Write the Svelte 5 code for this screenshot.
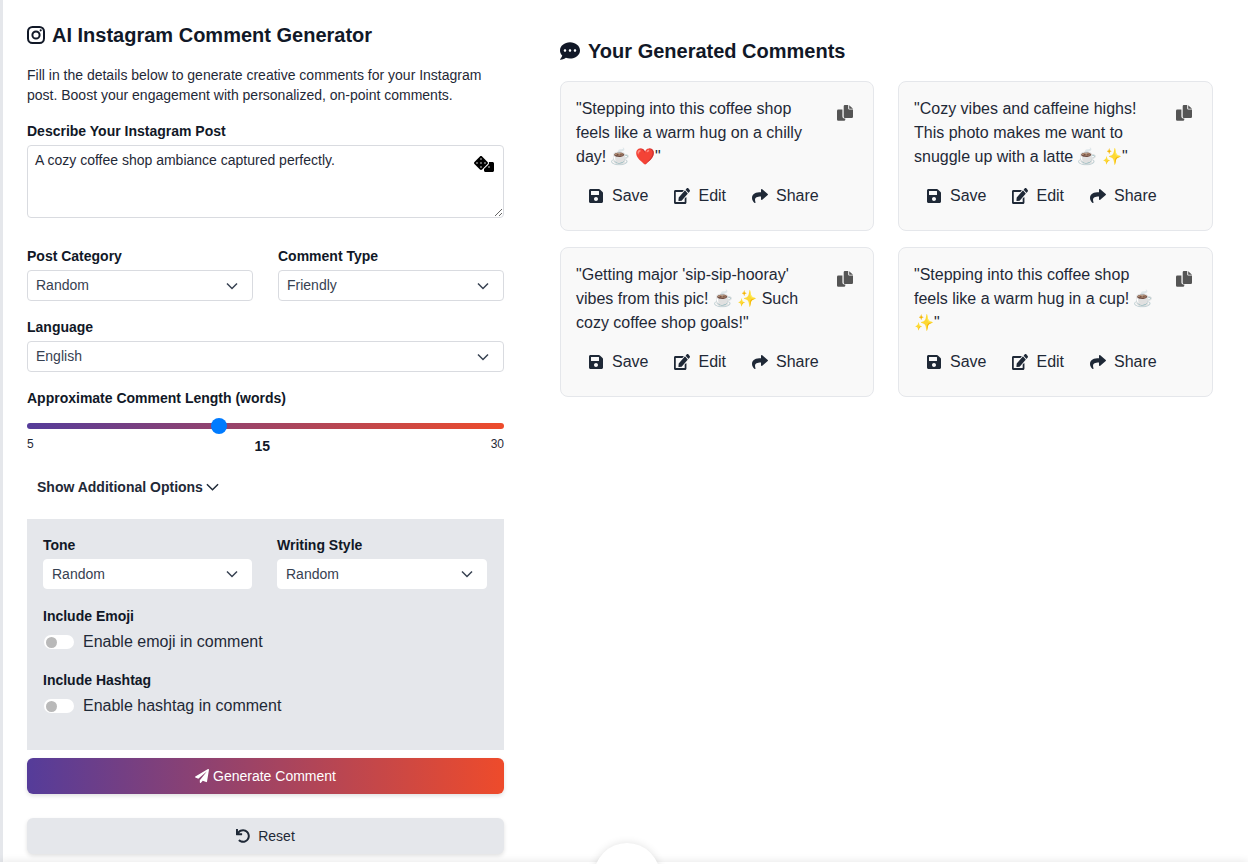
<script>
	const icons = {
		save: {
			box: '0 0 448 512',
			d: 'M433.941 129.941l-83.882-83.882A48 48 0 0 0 316.118 32H48C21.49 32 0 53.49 0 80v352c0 26.51 21.49 48 48 48h352c26.51 0 48-21.49 48-48V163.882a48 48 0 0 0-14.059-33.941zM224 416c-35.346 0-64-28.654-64-64 0-35.346 28.654-64 64-64s64 28.654 64 64c0 35.346-28.654 64-64 64zm96-304.52V212c0 6.627-5.373 12-12 12H76c-6.627 0-12-5.373-12-12V108c0-6.627 5.373-12 12-12h228.52c3.183 0 6.235 1.264 8.485 3.515l3.48 3.48A11.996 11.996 0 0 1 320 111.48z'
		},
		edit: {
			box: '0 0 576 512',
			fit: 'none',
			d: 'M402.6 83.2l90.2 90.2c3.8 3.8 3.8 10 0 13.8L274.4 405.6l-92.8 10.3c-12.4 1.4-22.9-9.1-21.5-21.5l10.3-92.8L388.8 83.2c3.8-3.8 10-3.8 13.8 0zm162-22.9l-48.8-48.8c-15.2-15.2-39.9-15.2-55.2 0l-35.4 35.4c-3.8 3.8-3.8 10 0 13.8l90.2 90.2c3.8 3.8 10 3.8 13.8 0l35.4-35.4c15.2-15.3 15.2-40 0-55.2zM384 346.2V448H64V128h229.8c3.2 0 6.2-1.3 8.5-3.5l40-40c7.6-7.6 2.2-20.5-8.5-20.5H48C21.5 64 0 85.5 0 112v352c0 26.5 21.5 48 48 48h352c26.5 0 48-21.5 48-48V306.2c0-10.7-12.9-16-20.5-8.5l-40 40c-2.2 2.3-3.5 5.3-3.5 8.5z'
		},
		share: {
			box: '0 0 512 512',
			d: 'M503.691 189.836L327.687 37.851C312.281 24.546 288 35.347 288 56.015v80.053C127.371 137.907 0 170.1 0 322.326c0 61.441 39.581 122.309 83.333 154.132 13.653 9.931 33.111-2.533 28.077-18.631C66.066 312.814 132.917 274.316 288 272.085V360c0 20.7 24.3 31.453 39.687 18.164l176.004-152c11.071-9.562 11.086-26.753 0-36.328z'
		}
	};

	const comments = [
		'"Stepping into this coffee shop feels like a warm hug on a chilly day! ☕ ❤️"',
		'"Cozy vibes and caffeine highs! This photo makes me want to snuggle up with a latte ☕ ✨"',
		'"Getting major \'sip-sip-hooray\' vibes from this pic! ☕ ✨ Such cozy coffee shop goals!"',
		'"Stepping into this coffee shop feels like a warm hug in a cup! ☕ ✨"'
	];

	const actions = [
		{ name: 'Save', icon: icons.save },
		{ name: 'Edit', icon: icons.edit },
		{ name: 'Share', icon: icons.share }
	];

	let length = $state(15);
</script>

<div class="page">
	<section class="form">
		<h1>
			<svg class="insta" viewBox="0 0 18 18" fill="none" stroke="currentColor" stroke-width="2">
				<rect x="1" y="1" width="16" height="16" rx="4.5" />
				<circle cx="9" cy="9" r="3.6" />
				<circle cx="13.7" cy="4.3" r="1.1" fill="currentColor" stroke="none" />
			</svg>
			AI Instagram Comment Generator
		</h1>
		<p class="intro">
			Fill in the details below to generate creative comments for your Instagram post. Boost your
			engagement with personalized, on-point comments.
		</p>

		<label class="label" for="post">Describe Your Instagram Post</label>
		<div class="area">
			<textarea id="post">A cozy coffee shop ambiance captured perfectly.</textarea>
			<svg class="dice" viewBox="0 0 640 512">
				<path
					d="M592 192H473.26c12.69 29.59 7.12 65.2-17 89.32L320 417.58V464c0 26.51 21.49 48 48 48h224c26.51 0 48-21.49 48-48V240c0-26.51-21.49-48-48-48zM480 376c-13.25 0-24-10.75-24-24 0-13.26 10.75-24 24-24s24 10.74 24 24c0 13.25-10.75 24-24 24zm-46.37-186.7L258.7 14.37c-19.16-19.16-50.23-19.16-69.39 0L14.37 189.3c-19.16 19.16-19.16 50.23 0 69.39L189.3 433.63c19.16 19.16 50.23 19.16 69.39 0L433.63 258.7c19.16-19.17 19.16-50.24 0-69.4zM96 248c-13.25 0-24-10.75-24-24 0-13.26 10.75-24 24-24s24 10.74 24 24c0 13.25-10.75 24-24 24zm128 128c-13.25 0-24-10.75-24-24 0-13.26 10.75-24 24-24s24 10.74 24 24c0 13.25-10.75 24-24 24zm0-128c-13.25 0-24-10.75-24-24 0-13.26 10.75-24 24-24s24 10.74 24 24c0 13.25-10.75 24-24 24zm0-128c-13.25 0-24-10.75-24-24 0-13.26 10.75-24 24-24s24 10.74 24 24c0 13.25-10.75 24-24 24zm128 128c-13.25 0-24-10.75-24-24 0-13.26 10.75-24 24-24s24 10.74 24 24c0 13.25-10.75 24-24 24z"
				/>
			</svg>
		</div>

		<div class="two first">
			<div>
				<label class="label" for="category">Post Category</label>
				<select id="category"><option>Random</option></select>
			</div>
			<div>
				<label class="label" for="type">Comment Type</label>
				<select id="type"><option>Friendly</option></select>
			</div>
		</div>

		<label class="label lang" for="language">Language</label>
		<select id="language"><option>English</option></select>

		<label class="label range-label" for="length">Approximate Comment Length (words)</label>
		<input id="length" class="range" type="range" min="5" max="30" bind:value={length} />
		<div class="scale">
			<span>5</span>
			<b>{length}</b>
			<span>30</span>
		</div>

		<button class="more">
			Show Additional Options
			<svg viewBox="0 0 14 8" fill="none" stroke="currentColor" stroke-width="1.6">
				<path d="M1 1l6 6 6-6" />
			</svg>
		</button>

		<div class="extra">
			<div class="two inner">
				<div>
					<label class="label" for="tone">Tone</label>
					<select id="tone"><option>Random</option></select>
				</div>
				<div>
					<label class="label" for="style">Writing Style</label>
					<select id="style"><option>Random</option></select>
				</div>
			</div>

			<div class="label switch-title">Include Emoji</div>
			<div class="switch"><span class="track"><i></i></span>Enable emoji in comment</div>
			<div class="label switch-title second">Include Hashtag</div>
			<div class="switch"><span class="track"><i></i></span>Enable hashtag in comment</div>
		</div>

		<button class="generate">
			<svg viewBox="0 0 512 512">
				<path
					d="M476 3.2L12.5 270.6c-18.1 10.4-15.8 35.6 2.2 43.2L121 358.4l287.3-253.2c5.5-4.9 13.3 2.6 8.6 8.3L176 407v80.5c0 23.6 28.5 32.9 42.5 15.8L282 426l124.6 52.2c14.2 6 30.4-2.9 33-18.2l72-432C515 7.8 493.3-6.8 476 3.2z"
				/>
			</svg>
			Generate Comment
		</button>
		<button class="reset">
			<svg viewBox="0 0 512 512">
				<path
					d="M212.333 224.333H12c-6.627 0-12-5.373-12-12V12C0 5.373 5.373 0 12 0h48c6.627 0 12 5.373 12 12v78.112C117.773 39.279 184.26 7.47 258.175 8.007c136.906.994 246.448 111.623 246.157 248.532C504.041 393.258 393.12 504 256.333 504c-64.089 0-122.496-24.313-166.51-64.215-5.099-4.622-5.334-12.554-.467-17.42l33.967-33.967c4.474-4.474 11.662-4.717 16.401-.525C170.76 415.336 211.58 432 256.333 432c97.268 0 176-78.716 176-176 0-97.267-78.716-176-176-176-58.496 0-110.28 28.476-142.274 72.333h98.274c6.627 0 12 5.373 12 12v48c0 6.627-5.373 12-12 12z"
				/>
			</svg>
			Reset
		</button>
	</section>

	<section class="results">
		<h2>
			<svg viewBox="0 0 512 512">
				<path
					d="M256 32C114.6 32 0 125.1 0 240c0 49.6 21.4 95 57 130.7C44.5 421.1 2.7 466 2.2 466.5c-2.2 2.3-2.8 5.7-1.5 8.7S4.8 480 8 480c66.3 0 116-31.8 140.6-51.4 32.7 12.3 69 19.4 107.4 19.4 141.4 0 256-93.1 256-208S397.4 32 256 32zM128 272c-17.7 0-32-14.3-32-32s14.3-32 32-32 32 14.3 32 32-14.3 32-32 32zm128 0c-17.7 0-32-14.3-32-32s14.3-32 32-32 32 14.3 32 32-14.3 32-32 32zm128 0c-17.7 0-32-14.3-32-32s14.3-32 32-32 32 14.3 32 32-14.3 32-32 32z"
				/>
			</svg>
			Your Generated Comments
		</h2>
		<div class="cards">
			{#each comments as text}
				<article class="card">
					<div class="top">
						<p>{text}</p>
						<svg class="copy" viewBox="0 0 16 16">
							<path d="M1.3 4.6H5.4V11.6a2 2 0 0 0 2 2H8.3V14.5a1.3 1.3 0 0 1-1.3 1.3H1.3A1.3 1.3 0 0 1 0 14.5V5.9A1.3 1.3 0 0 1 1.3 4.6z" />
							<path d="M7.9 0H11.2V3.6a1 1 0 0 0 1 1H16V11.7a1.2 1.2 0 0 1-1.2 1.2H7.9a1.2 1.2 0 0 1-1.2-1.2V1.2A1.2 1.2 0 0 1 7.9 0zM12.2 0.2L16 3.8H12.2z" />
						</svg>
					</div>
					<div class="actions">
						{#each actions as a}
							<span class="action">
								<svg viewBox={a.icon.box} preserveAspectRatio={a.icon.fit}><path d={a.icon.d} /></svg>
								{a.name}
							</span>
						{/each}
					</div>
				</article>
			{/each}
		</div>
	</section>
</div>

<div class="dock"><span class="bump"></span></div>

<style>
	:global(body) {
		margin: 0;
		background: #fff;
		font-family: 'Liberation Sans', Arial, 'Noto Color Emoji', sans-serif;
		color: #1f2937;
		overflow: hidden;
	}

	.page {
		height: 864px;
		box-sizing: border-box;
		border-left: 3px solid #e5e7eb;
		display: grid;
		grid-template-columns: 477px 653px;
		column-gap: 56px;
		padding-left: 24px;
	}

	h1 {
		display: flex;
		align-items: center;
		gap: 7px;
		margin: 23px 0 0;
		font-size: 20px;
		line-height: 24px;
		color: #111827;
	}

	.insta {
		width: 18px;
		height: 18px;
	}

	.intro {
		margin: 18px 0 0;
		font-size: 14px;
		line-height: 20px;
	}

	.label {
		display: block;
		font-size: 14px;
		font-weight: 700;
		line-height: 20px;
		color: #111827;
	}

	.intro + .label {
		margin-top: 16px;
	}

	.area {
		position: relative;
		margin-top: 4px;
	}

	textarea {
		display: block;
		box-sizing: border-box;
		width: 100%;
		height: 73px;
		padding: 4px 7px;
		border: 1px solid #d9dbe0;
		border-radius: 4px;
		background: #fff;
		font: inherit;
		font-size: 14px;
		line-height: 20px;
		color: #1f2937;
	}

	.dice {
		position: absolute;
		top: 11px;
		right: 10px;
		width: 20px;
		height: 16px;
	}

	select {
		display: block;
		box-sizing: border-box;
		width: 100%;
		height: 31px;
		margin-top: 4px;
		padding: 0 8px 2px;
		border: 1px solid #d9dbe0;
		border-radius: 4px;
		appearance: none;
		background: #fff url("data:image/svg+xml,%3Csvg xmlns='http://www.w3.org/2000/svg' viewBox='0 0 12 8' fill='none' stroke='%23374151' stroke-width='1.5'%3E%3Cpath d='M1 1.5l5 5 5-5'/%3E%3C/svg%3E") no-repeat right 14px center / 12px 8px;
		font: inherit;
		font-size: 14px;
		color: #374151;
	}

	.two {
		display: grid;
		grid-template-columns: 226px 226px;
		column-gap: 25px;
	}

	.first {
		margin-top: 28px;
	}

	.lang {
		margin-top: 16px;
	}

	.range-label {
		margin-top: 16px;
	}

	.range {
		display: block;
		width: 100%;
		height: 16px;
		margin: 10px 0 0;
		appearance: none;
		background: transparent;
	}

	.range::-webkit-slider-runnable-track {
		height: 6px;
		border-radius: 3px;
		background: linear-gradient(to right, #553c9a, #ee4b2b);
	}

	.range::-webkit-slider-thumb {
		appearance: none;
		width: 16px;
		height: 16px;
		margin-top: -5px;
		border-radius: 50%;
		background: #007bff;
	}

	.scale {
		display: flex;
		justify-content: space-between;
		margin-top: 2px;
		font-size: 12px;
		line-height: 16px;
	}

	.scale b {
		margin-top: 2px;
		font-size: 14px;
		color: #111827;
	}

	button {
		font: inherit;
		border: 0;
		cursor: pointer;
	}

	.more {
		display: flex;
		align-items: center;
		gap: 3px;
		margin: 23px 0 0;
		padding: 0 0 0 10px;
		background: none;
		font-size: 14px;
		font-weight: 700;
		line-height: 20px;
		color: #1f2937;
	}

	.more svg {
		width: 13px;
		height: 8px;
	}

	.extra {
		box-sizing: border-box;
		height: 231px;
		margin-top: 22px;
		padding: 16px 16px 0;
		background: #e5e7eb;
	}

	.inner {
		grid-template-columns: 209px 210px;
		column-gap: 25px;
	}

	.inner select {
		height: 30px;
		padding-bottom: 0;
		border-color: #fff;
		background-position: right 13px center;
	}

	.switch-title {
		margin-top: 17px;
	}

	.switch-title.second {
		margin-top: 16px;
	}

	.switch {
		display: flex;
		align-items: center;
		gap: 9px;
		margin-top: 4px;
		margin-left: 1px;
		font-size: 16px;
		line-height: 24px;
		color: #1f2937;
	}

	.track {
		display: block;
		box-sizing: border-box;
		width: 30px;
		height: 14px;
		padding: 1.5px 2px;
		border-radius: 7px;
		background: #fff;
	}

	.track i {
		display: block;
		width: 11px;
		height: 11px;
		border-radius: 50%;
		background: #b9b9b9;
	}

	.generate,
	.reset {
		display: flex;
		align-items: center;
		justify-content: center;
		width: 100%;
		height: 36px;
		border-radius: 6px;
		font-size: 14px;
		box-shadow: 0 2px 4px rgba(0, 0, 0, 0.12);
	}

	.generate {
		gap: 4px;
		margin-top: 8px;
		background: linear-gradient(to right, #553c9a, #ee4b2b);
		color: #fff;
	}

	.generate svg {
		width: 14px;
		height: 14px;
		fill: #fff;
	}

	.reset {
		gap: 8px;
		margin-top: 24px;
		background: #e5e7eb;
		color: #1f2937;
	}

	.reset svg {
		width: 14px;
		height: 14px;
		fill: #1f2937;
	}

	h2 {
		display: flex;
		align-items: center;
		gap: 8px;
		margin: 39px 0 0;
		font-size: 20px;
		line-height: 24px;
		color: #111827;
	}

	h2 svg {
		width: 20px;
		height: 20px;
		fill: #111827;
	}

	.cards {
		display: grid;
		grid-template-columns: 314px 315px;
		column-gap: 24px;
		row-gap: 16px;
		margin-top: 18px;
	}

	.card {
		box-sizing: border-box;
		height: 150px;
		padding: 15px;
		border: 1px solid #e5e7eb;
		border-radius: 8px;
		background: #f9f9f9;
	}

	.top {
		display: flex;
		justify-content: space-between;
		gap: 8px;
	}

	.top p {
		margin: 0;
		width: 240px;
		font-size: 16px;
		line-height: 24px;
		color: #1f2937;
	}

	.copy {
		flex: none;
		width: 16px;
		height: 16px;
		margin: 8px 5px 0 0;
		fill: #555;
	}

	.actions {
		display: flex;
		gap: 26px;
		margin-top: 15px;
		padding-left: 12px;
	}

	.action {
		display: flex;
		align-items: center;
		gap: 8px;
		font-size: 16px;
		line-height: 24px;
		color: #1f2937;
	}

	.action svg {
		width: 16px;
		height: 16px;
		fill: #1f2937;
	}

	.dock {
		position: fixed;
		left: 0;
		right: 0;
		bottom: -4px;
		height: 6px;
		background: #fff;
		box-shadow: 0 0 8px rgba(0, 0, 0, 0.12);
	}

	.bump {
		position: absolute;
		left: 594px;
		top: -19px;
		width: 66px;
		height: 66px;
		border-radius: 50%;
		background: #fff;
		box-shadow: 0 0 8px rgba(0, 0, 0, 0.12);
	}
</style>
